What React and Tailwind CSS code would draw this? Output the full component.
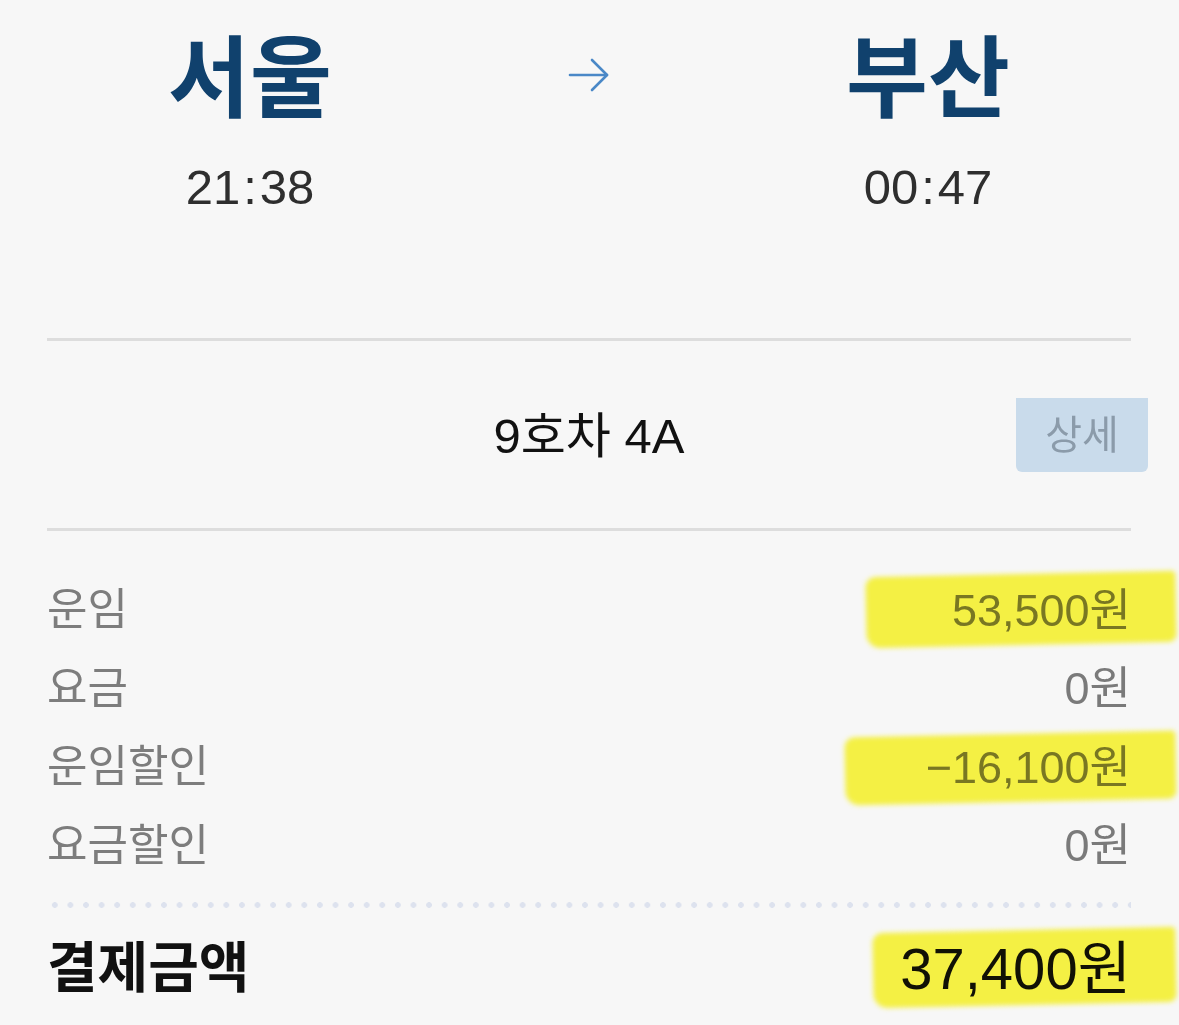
import React from "react";

const font = { fontFamily: '"Liberation Sans", "Noto Sans CJK KR", sans-serif' };

// fare rows, hl = highlighter mark
const rows = [
  { label: "운임", value: "53,500원", hl: "right-[-45px] top-[3px] h-[71px] w-[310px]" },
  { label: "요금", value: "0원" },
  { label: "운임할인", value: "−16,100원", hl: "right-[-45px] top-[6px] h-[68px] w-[331px]" },
  { label: "요금할인", value: "0원" },
];

const Highlight = ({ className }) => (
  <span
    className={
      "pointer-events-none absolute rotate-[-1.2deg] rounded-[10px_4px_8px_14px] bg-[#fcf846] mix-blend-multiply blur-[2.5px] " +
      className
    }
  />
);

const Arrow = () => (
  <svg width="42" height="36" viewBox="0 0 42 36" fill="none" stroke="#4a88c7" strokeWidth="2.6" strokeLinecap="round" strokeLinejoin="round">
    <path d="M2 18h37" />
    <path d="M24 3l15 15-15 15" />
  </svg>
);

const Time = ({ h, m }) => (
  <div className="mt-[39px] flex text-[49px] leading-none text-[#2e2e2e]">
    <span>{h}</span>
    <span className="mx-[3px]">:</span>
    <span>{m}</span>
  </div>
);

export default function App() {
  return (
    <div className="min-h-[1025px] w-full bg-[#f7f7f7]" style={font}>
      <div className="pl-[47px] pr-[48px]">
        {/* route */}
        <div className="flex items-start justify-between pt-[35px]">
          <div className="flex w-[406px] flex-col items-center">
            <div className="text-[89px] font-semibold leading-none text-[#10416d]">서울</div>
            <Time h="21" m="38" />
          </div>
          <div className="pt-[22px]">
            <Arrow />
          </div>
          <div className="flex w-[406px] flex-col items-center">
            <div className="text-[89px] font-semibold leading-none text-[#10416d]">부산</div>
            <Time h="00" m="47" />
          </div>
        </div>

        <div className="mt-[126px] h-[3px] bg-[#dddddd]" />

        {/* seat */}
        <div className="grid h-[187px] grid-cols-[1fr_auto_1fr] items-center">
          <div />
          <div className="pt-[4px] text-[49px] leading-none text-[#111]">9호차 4A</div>
          <div className="flex justify-end">
            <button className="mr-[-17px] flex h-[74px] w-[132px] items-center justify-center rounded-b-[6px] bg-[#c9dbeb] text-[40px] text-[#8b9baa]">
              상세
            </button>
          </div>
        </div>

        <div className="h-[3px] bg-[#dddddd]" />

        {/* fares */}
        <div className="pt-[40px]">
          {rows.map((r) => (
            <div key={r.label} className="relative flex h-[78.5px] items-center justify-between">
              <span className="text-[44px] text-[#7d7d7d]">{r.label}</span>
              <span className="text-[45px] text-[#7a7a7a]">{r.value}</span>
              {r.hl && <Highlight className={r.hl} />}
            </div>
          ))}
        </div>

        <div className="mt-[17px] h-[6px] bg-[radial-gradient(circle,#dde2ee_2.6px,transparent_3.1px)] bg-[length:15.6px_6px]" />

        {/* total */}
        <div className="relative flex h-[124px] items-center justify-between pb-[4px]">
          <span className="text-[55px] font-bold text-[#111]">결제금액</span>
          <span className="text-[58px] text-[#111]">37,400원</span>
          <Highlight className="right-[-45px] top-[22px] h-[75px] w-[303px]" />
        </div>
      </div>
    </div>
  );
}
